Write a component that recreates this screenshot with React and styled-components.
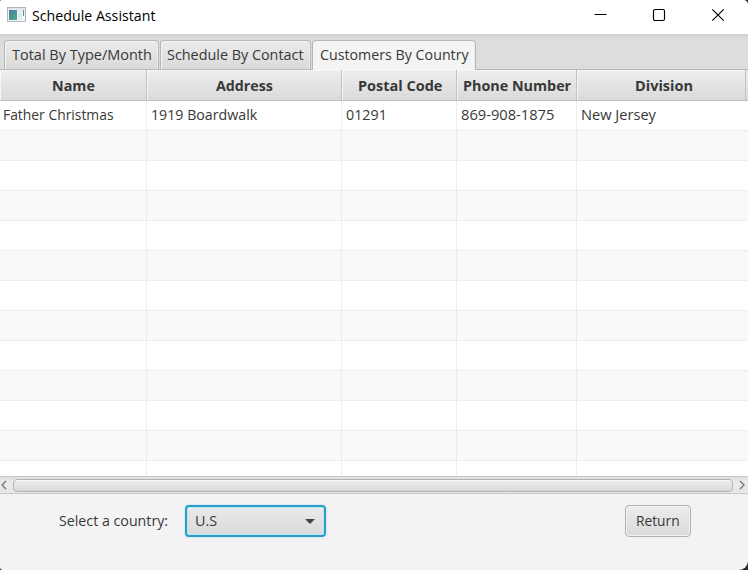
import React, { useLayoutEffect, useRef } from "react";
import styled, { createGlobalStyle } from "styled-components";

const Global = createGlobalStyle`
  * { box-sizing: border-box; }
  body { margin: 0; background: #2b2b2b; }
`;

const Window = styled.div`
  display: flex;
  flex-direction: column;
  width: 748px;
  height: 570px;
  overflow: hidden;
  background: #f3f3f3;
  border-radius: 2px 5px 9px 3px;
  color: #383838;
  font: 15px/20px "Open Sans", "Noto Sans", sans-serif;
`;

const TextBox = styled.span`
  display: block;
  flex: none;
  width: ${(p) => p.$width}px;
  white-space: nowrap;
`;

const TextRun = styled.span`
  display: inline-block;
  transform-origin: 0 50%;
`;

/* Condenses a label so that it fills exactly the given width. */
function Label({ width, children }) {
  const run = useRef(null);
  useLayoutEffect(() => {
    const el = run.current;
    el.style.transform = `scaleX(${width / el.offsetWidth})`;
  }, [width, children]);
  return (
    <TextBox $width={width}>
      <TextRun ref={run}>{children}</TextRun>
    </TextBox>
  );
}

const TitleBar = styled.header`
  display: flex;
  align-items: center;
  flex: none;
  height: 34px;
  padding: 0 23px 4px 7px;
  background: #fff;
  color: #000;
`;

const AppIcon = styled.svg`
  flex: none;
  width: 19px;
  height: 16px;
  margin-right: 6px;
`;

const WindowControls = styled.div`
  display: flex;
  gap: 45px;
  margin-left: auto;
`;

const ControlIcon = styled.svg`
  display: block;
  width: 14px;
  height: 14px;
  fill: none;
  stroke: #000;
  stroke-width: 1.15;
`;

const TabBar = styled.nav`
  display: flex;
  align-items: flex-end;
  gap: 1px;
  flex: none;
  height: 36px;
  padding-left: 4px;
  background: linear-gradient(#cfcfcf, #dadada 4px, #dddddd 9px);
  box-shadow: inset 0 -1px #b5b5b5;
`;

const Tab = styled.button`
  display: flex;
  justify-content: center;
  height: ${(p) => (p.$active ? 30 : 29)}px;
  margin-bottom: ${(p) => (p.$active ? 0 : 1)}px;
  width: ${(p) => p.$width}px;
  padding: 3px 0 0;
  border: 1px solid #b5b5b5;
  border-bottom: 0;
  border-radius: 4px 4px 0 0;
  background: ${(p) => (p.$active ? "#f4f4f4" : "linear-gradient(#ebebeb, #dadada)")};
  box-shadow: inset 1px 1px #f6f6f6, inset -1px 0 #eee;
  color: inherit;
  font: inherit;
`;

const columns = "147px 195px 115px 120px 169px 2px";

const HeaderRow = styled.div`
  display: grid;
  grid-template-columns: ${columns};
  flex: none;
  height: 31px;
  border-bottom: 1px solid #c2c2c2;
  background: linear-gradient(#eeeeee, #dadada);
  font-weight: 700;
`;

const HeaderCell = styled.div`
  display: flex;
  justify-content: center;
  padding: 5px 0 0 ${(p) => p.$shift}px;
  border-right: 1px solid #c2c2c2;
  box-shadow: inset 1px 1px #f7f7f7;
`;

const Body = styled.div`
  flex: none;
  height: 375px;
  overflow: hidden;
`;

const Row = styled.div`
  display: grid;
  grid-template-columns: ${columns};
  height: 30px;
  background: ${(p) => (p.$odd ? "#f9f9f9" : "#fff")};
  border-bottom: 1px solid #ededed;
`;

const Cell = styled.div`
  padding: 3px 0 0 ${(p) => p.$inset}px;
  border-right: ${(p) => (p.$last ? 0 : 1)}px solid #ededed;
`;

const ScrollBar = styled.div`
  display: flex;
  align-items: center;
  justify-content: space-between;
  flex: none;
  height: 18px;
  padding: 0 3px 0 1px;
  border-top: 1px solid #c8c8c8;
  border-bottom: 1px solid #c8c8c8;
  background: linear-gradient(#dedede, #eaeaea 5px, #e6e6e6);
`;

const Chevron = styled.svg`
  width: 6px;
  height: 10px;
  fill: none;
  stroke: #737373;
  stroke-width: 1.3;
`;

const Thumb = styled.div`
  width: 720px;
  height: 13px;
  border: 1px solid #b3b3b3;
  border-radius: 4px;
  background: linear-gradient(#ededed, #dadada);
  box-shadow: inset 0 1px #fafafa;
`;

const Footer = styled.footer`
  display: flex;
  align-items: flex-start;
  padding: 11px 0 0 59px;
`;

const FieldLabel = styled.div`
  margin-right: 17px;
  padding-top: 5px;
`;

const Select = styled.button`
  display: flex;
  align-items: center;
  justify-content: space-between;
  width: 141px;
  height: 32px;
  padding: 0 9px 2px 8px;
  border: 2px solid #2a9ec7;
  border-radius: 4px;
  background: linear-gradient(#eaeaea, #dadada);
  box-shadow: 0 0 2px 0 #8ad8f2, inset 0 0 1px 1px #b9e7f5;
  color: inherit;
  font: inherit;
`;

const Arrow = styled.svg`
  width: 10px;
  height: 5px;
  margin-top: 2px;
  fill: #444;
`;

const ReturnButton = styled.button`
  display: flex;
  align-items: center;
  justify-content: center;
  width: 66px;
  height: 32px;
  margin-left: 299px;
  padding: 0 1px 2px 0;
  border: 1px solid #b2b2b2;
  border-radius: 4px;
  background: linear-gradient(#ececec, #dadada);
  box-shadow: inset 0 0 0 1px #f1f1f1;
  color: inherit;
  font: inherit;
`;

const tabs = [
  { text: "Total By Type/Month", width: 155, textWidth: 140 },
  { text: "Schedule By Contact", width: 151, textWidth: 137 },
  { text: "Customers By Country", width: 164, textWidth: 149, active: true },
];

const headers = [
  ["Name", 43, 0],
  ["Address", 57, 0],
  ["Postal Code", 84, 1],
  ["Phone Number", 108, 1],
  ["Division", 58, 5],
];

const customer = [
  ["Father Christmas", 111, 3],
  ["1919 Boardwalk", 106, 4],
  ["01291", 41, 4],
  ["869-908-1875", 93, 4],
  ["New Jersey", 75, 4],
];

const rowNumbers = Array.from({ length: 13 }, (_, i) => i);

export default function App() {
  return (
    <>
      <Global />
      <Window>
        <TitleBar>
          <AppIcon viewBox="0 0 19 16">
            <defs>
              <linearGradient id="pane" x1="0" y1="0" x2="1" y2="1">
                <stop offset="0" stopColor="#4d78a0" />
                <stop offset="1" stopColor="#4fae85" />
              </linearGradient>
            </defs>
            <rect x=".5" y=".5" width="18" height="14" fill="#f3f6f8" stroke="#b0b6bb" />
            <rect x="1" y="1" width="17" height="1.5" fill="#dfe4e9" />
            <rect x="2" y="3" width="8" height="10" fill="url(#pane)" />
            <rect x="11" y="3" width="4" height="10" fill="#e2ebee" />
            <path d="M16.5 3v6" stroke="#5b9c91" />
          </AppIcon>
          <Label width={123}>Schedule Assistant</Label>
          <WindowControls>
            <ControlIcon viewBox="0 0 14 14"><path d="M1.5 6.5h12" /></ControlIcon>
            <ControlIcon viewBox="0 0 14 14"><rect x="1.5" y="1.5" width="11" height="11" rx="1.5" /></ControlIcon>
            <ControlIcon viewBox="0 0 14 14"><path d="M1.3 1.3l11.4 11.4M12.7 1.3L1.3 12.7" /></ControlIcon>
          </WindowControls>
        </TitleBar>
        <TabBar>
          {tabs.map((t) => (
            <Tab key={t.text} $width={t.width} $active={t.active}>
              <Label width={t.textWidth}>{t.text}</Label>
            </Tab>
          ))}
        </TabBar>
        <HeaderRow>
          {headers.map(([text, width, shift]) => (
            <HeaderCell key={text} $shift={shift}><Label width={width}>{text}</Label></HeaderCell>
          ))}
        </HeaderRow>
        <Body>
          {rowNumbers.map((n) => (
            <Row key={n} $odd={n % 2 === 1}>
              {customer.map(([text, width, inset], i) => (
                <Cell key={text} $inset={inset} $last={i === 4}>
                  {n === 0 && <Label width={width}>{text}</Label>}
                </Cell>
              ))}
            </Row>
          ))}
        </Body>
        <ScrollBar>
          <Chevron viewBox="0 0 6 10"><path d="M5 1L1 5l4 4" /></Chevron>
          <Thumb />
          <Chevron viewBox="0 0 6 10"><path d="M1 1l4 4-4 4" /></Chevron>
        </ScrollBar>
        <Footer>
          <FieldLabel><Label width={109}>Select a country:</Label></FieldLabel>
          <Select>
            <Label width={22}>U.S</Label>
            <Arrow viewBox="0 0 10 5"><path d="M0 0h10L5 5z" /></Arrow>
          </Select>
          <ReturnButton><Label width={44}>Return</Label></ReturnButton>
        </Footer>
      </Window>
    </>
  );
}
